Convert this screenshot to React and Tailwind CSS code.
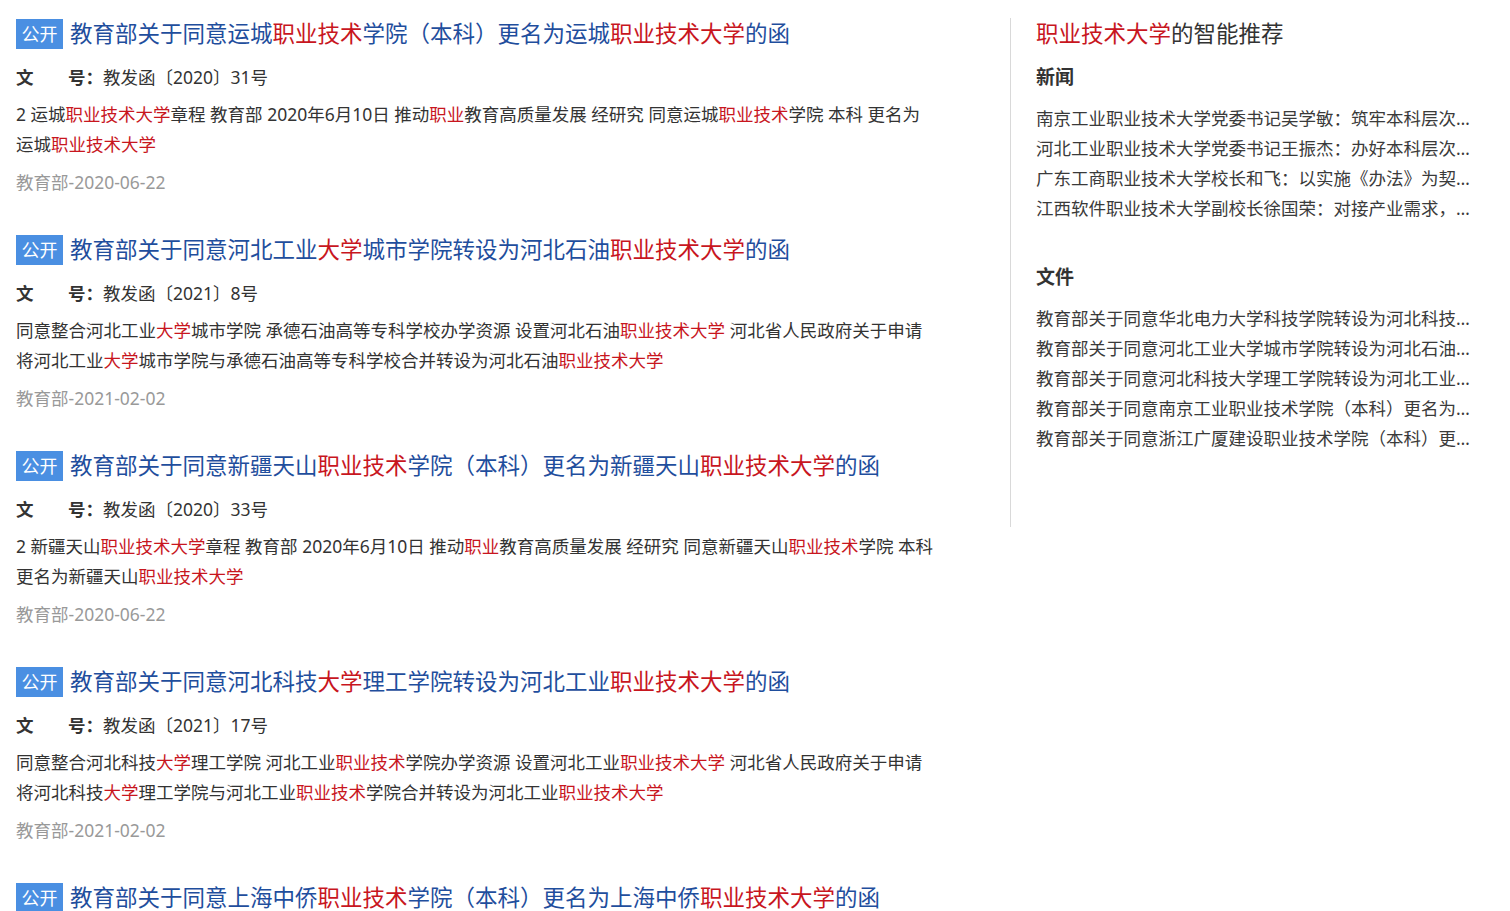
import React from "react";

const RED = "text-[#c8161e]";

function Hl({ s }) {
  const parts = s.split(/\[|\]/);
  return (
    <>
      {parts.map((p, i) =>
        i % 2 === 1 ? (
          <span key={i} className={RED}>
            {p}
          </span>
        ) : (
          <React.Fragment key={i}>{p}</React.Fragment>
        )
      )}
    </>
  );
}

const items = [
  {
    title: "教育部关于同意运城[职业技术]学院（本科）更名为运城[职业技术大学]的函",
    no: "教发函〔2020〕31号",
    lines: [
      "2 运城[职业技术大学]章程 教育部 2020年6月10日 推动[职业]教育高质量发展 经研究 同意运城[职业技术]学院 本科 更名为",
      "运城[职业技术大学]",
    ],
    date: "教育部-2020-06-22",
  },
  {
    title: "教育部关于同意河北工业[大学]城市学院转设为河北石油[职业技术大学]的函",
    no: "教发函〔2021〕8号",
    lines: [
      "同意整合河北工业[大学]城市学院 承德石油高等专科学校办学资源 设置河北石油[职业技术大学] 河北省人民政府关于申请",
      "将河北工业[大学]城市学院与承德石油高等专科学校合并转设为河北石油[职业技术大学]",
    ],
    date: "教育部-2021-02-02",
  },
  {
    title: "教育部关于同意新疆天山[职业技术]学院（本科）更名为新疆天山[职业技术大学]的函",
    no: "教发函〔2020〕33号",
    lines: [
      "2 新疆天山[职业技术大学]章程 教育部 2020年6月10日 推动[职业]教育高质量发展 经研究 同意新疆天山[职业技术]学院 本科",
      "更名为新疆天山[职业技术大学]",
    ],
    date: "教育部-2020-06-22",
  },
  {
    title: "教育部关于同意河北科技[大学]理工学院转设为河北工业[职业技术大学]的函",
    no: "教发函〔2021〕17号",
    lines: [
      "同意整合河北科技[大学]理工学院 河北工业[职业技术]学院办学资源 设置河北工业[职业技术大学] 河北省人民政府关于申请",
      "将河北科技[大学]理工学院与河北工业[职业技术]学院合并转设为河北工业[职业技术大学]",
    ],
    date: "教育部-2021-02-02",
  },
  {
    title: "教育部关于同意上海中侨[职业技术]学院（本科）更名为上海中侨[职业技术大学]的函",
    no: "教发函〔2020〕32号",
    lines: [
      "2 上海中侨[职业技术大学]章程 教育部 2020年6月10日 推动[职业]教育高质量发展 经研究 同意上海中侨[职业技术]学院 本科",
      "更名为上海中侨[职业技术大学]",
    ],
    date: "教育部-2020-06-22",
  },
];

const news = [
  "南京工业职业技术大学党委书记吴学敏：筑牢本科层次职业教育高质量发展根基",
  "河北工业职业技术大学党委书记王振杰：办好本科层次职业教育",
  "广东工商职业技术大学校长和飞：以实施《办法》为契机推动高质量发展",
  "江西软件职业技术大学副校长徐国荣：对接产业需求，培养高层次技术技能人才",
];

const files = [
  "教育部关于同意华北电力大学科技学院转设为河北科技工程职业技术大学的函",
  "教育部关于同意河北工业大学城市学院转设为河北石油职业技术大学的函",
  "教育部关于同意河北科技大学理工学院转设为河北工业职业技术大学的函",
  "教育部关于同意南京工业职业技术学院（本科）更名为南京工业职业技术大学的函",
  "教育部关于同意浙江广厦建设职业技术学院（本科）更名为浙江广厦建设职业技术大学的函",
];

function Item({ it }) {
  return (
    <div className="pb-[37px]">
      <div className="flex items-center h-[32px]">
        <span className="flex-none w-[47px] h-[30px] bg-[#4a8fe2] text-white text-[18px] leading-[30px] text-center">
          公开
        </span>
        <span className="ml-[7px] text-[22.5px] leading-[32px] text-[#1f4e9d] whitespace-nowrap">
          <Hl s={it.title} />
        </span>
      </div>
      <div className="mt-[12px] leading-[30px] text-[#333] whitespace-nowrap">
        <span className="font-bold inline-block w-[52px]">文</span>
        <span className="font-bold">号：</span>
        <span>{it.no}</span>
      </div>
      <div className="mt-[7px] leading-[30px] text-[#333]">
        {it.lines.map((l, i) => (
          <div key={i} className="whitespace-nowrap">
            <Hl s={l} />
          </div>
        ))}
      </div>
      <div className="mt-[8px] leading-[30px] text-[#999]">{it.date}</div>
    </div>
  );
}

export default function App() {
  return (
    <div
      className="flex bg-white text-[17.5px] min-h-[911px]"
      style={{ fontFamily: '"Noto Sans", "Noto Sans CJK SC", sans-serif' }}
    >
      <div className="flex-none w-[924px] ml-[16px] pt-[18px]">
        {items.map((it, i) => (
          <Item key={i} it={it} />
        ))}
      </div>
      <div className="flex-none ml-[70px] mt-[18px] self-start border-l border-[#d9d9d9] pl-[25px] pb-[74px]">
        <div className="text-[22.5px] leading-[32px] text-[#333] whitespace-nowrap">
          <span className={RED}>职业技术大学</span>的智能推荐
        </div>
        <div className="mt-[12px] text-[19px] font-bold leading-[30px] text-[#333]">新闻</div>
        <div className="mt-[11px] w-[440px] text-[#3a3a3a]">
          {news.map((n, i) => (
            <div key={i} className="truncate leading-[30px]">
              {n}
            </div>
          ))}
        </div>
        <div className="mt-[39px] text-[19px] font-bold leading-[30px] text-[#333]">文件</div>
        <div className="mt-[11px] w-[440px] text-[#3a3a3a]">
          {files.map((n, i) => (
            <div key={i} className="truncate leading-[30px]">
              {n}
            </div>
          ))}
        </div>
      </div>
    </div>
  );
}
